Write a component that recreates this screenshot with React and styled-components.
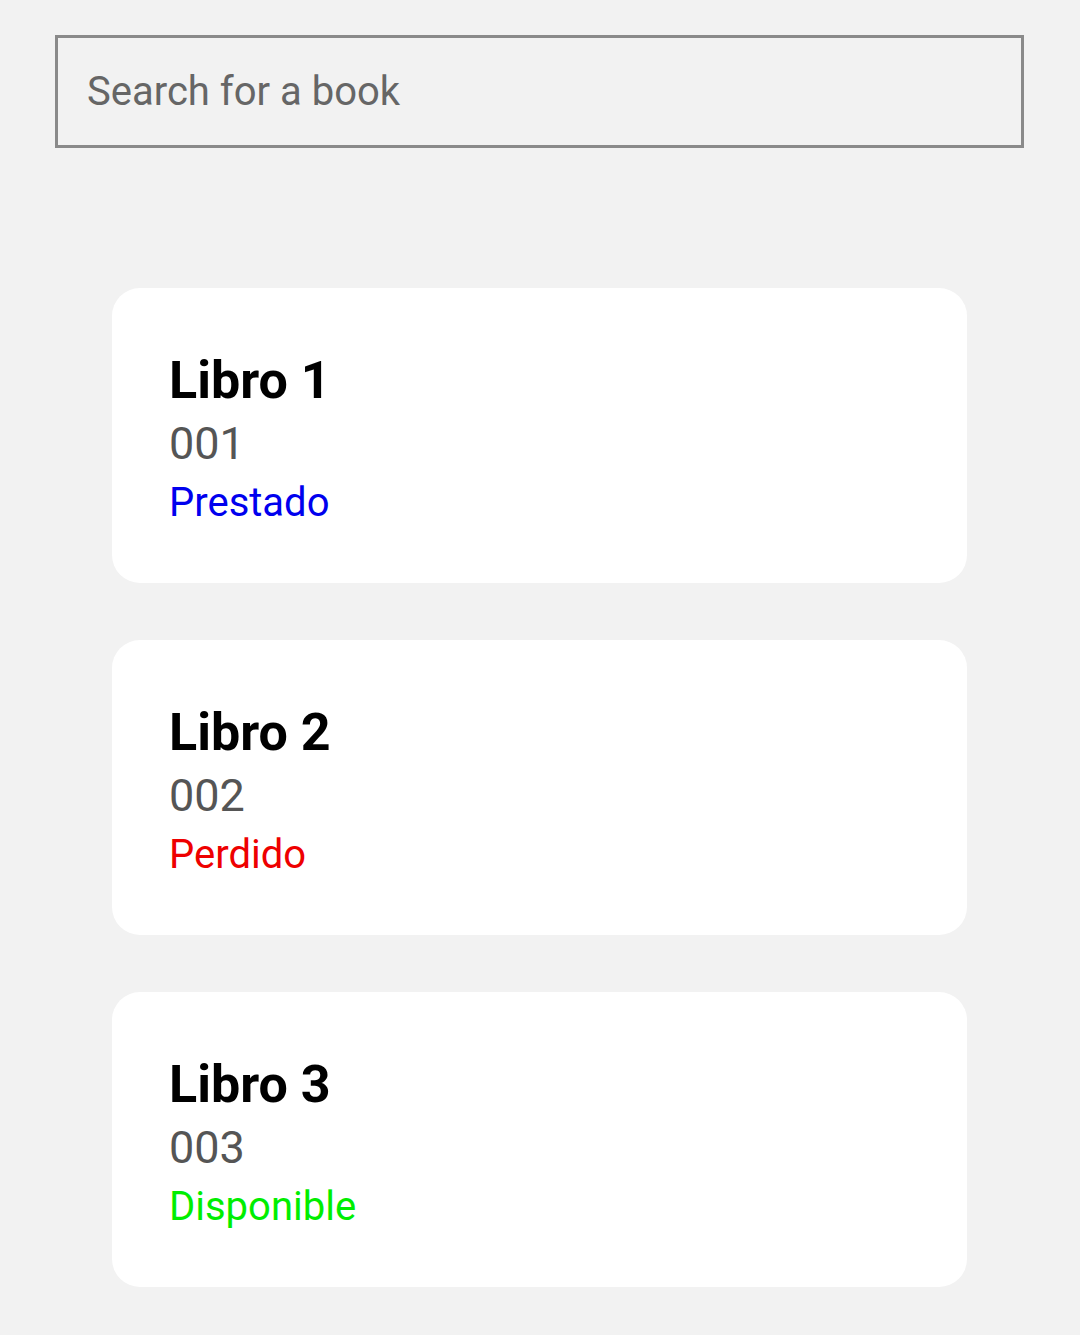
import React from "react";
import styled, { createGlobalStyle } from "styled-components";

const GlobalStyle = createGlobalStyle`
  html, body {
    margin: 0;
    padding: 0;
    background: #f2f2f2;
    font-family: Roboto, "Noto Sans", sans-serif;
  }
`;

const Page = styled.div`
  padding: 35px 56px 40px 55px;
  display: flex;
  flex-direction: column;
`;

const SearchBox = styled.input`
  box-sizing: border-box;
  width: 100%;
  height: 113px;
  border: 3px solid #8a8a8a;
  background: #f2f2f2;
  padding: 0 29px 1px;
  font-family: Roboto, sans-serif;
  font-size: 40px;
  color: #222;
  outline: none;

  &::placeholder {
    color: #666;
  }
`;

const List = styled.div`
  display: flex;
  flex-direction: column;
  gap: 57px;
  margin: 140px 57px 0 57px;
`;

const Card = styled.div`
  background: #fff;
  border-radius: 28px;
  padding: 63px 57px 57px 57px;
  display: flex;
  flex-direction: column;
`;

const Title = styled.div`
  font-size: 52px;
  font-weight: 700;
  line-height: 60px;
  color: #000;
`;

const Code = styled.div`
  font-size: 45px;
  line-height: 52px;
  margin-top: 7px;
  color: #555;
`;

const Status = styled.div`
  font-size: 40px;
  line-height: 46px;
  margin-top: 10px;
  color: ${(p) => p.$color};
`;

const books = [
  { title: "Libro 1", code: "001", status: "Prestado", color: "#0000ee" },
  { title: "Libro 2", code: "002", status: "Perdido", color: "#ee0000" },
  { title: "Libro 3", code: "003", status: "Disponible", color: "#00ee00" },
];

export default function App() {
  return (
    <>
      <GlobalStyle />
      <Page>
        <SearchBox placeholder="Search for a book" />
        <List>
          {books.map((b) => (
            <Card key={b.code}>
              <Title>{b.title}</Title>
              <Code>{b.code}</Code>
              <Status $color={b.color}>{b.status}</Status>
            </Card>
          ))}
        </List>
      </Page>
    </>
  );
}
